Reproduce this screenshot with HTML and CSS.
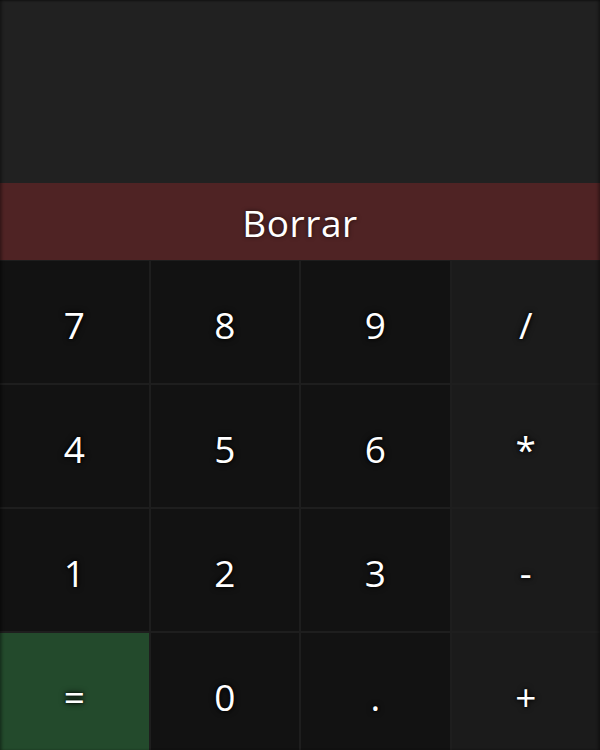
FILE: index.html
```html
<!DOCTYPE html>
<html lang="es">
<head>
<meta charset="utf-8">
<title>Calculadora</title>
<link rel="stylesheet" href="styles.css">
</head>
<body>
<div class="calc">
  <div class="display"></div>
  <button class="clear">Borrar</button>
  <div class="keys">
    <button class="key">7</button>
    <button class="key">8</button>
    <button class="key">9</button>
    <button class="key op">/</button>
    <button class="key">4</button>
    <button class="key">5</button>
    <button class="key">6</button>
    <button class="key op">*</button>
    <button class="key">1</button>
    <button class="key">2</button>
    <button class="key">3</button>
    <button class="key op">-</button>
    <button class="key eq">=</button>
    <button class="key">0</button>
    <button class="key">.</button>
    <button class="key op">+</button>
  </div>
  <div class="vignette"></div>
</div>
</body>
</html>
```
FILE: styles.css
```css
html, body {
  margin: 0;
  padding: 0;
  background: #1e1e1e;
  height: 750px;
  overflow: hidden;
}
.calc {
  position: relative;
  display: flex;
  flex-direction: column;
  width: 600px;
  font-family: "Open Sans", "Noto Sans", sans-serif;
}
.display {
  height: 183px;
  background: #212121;
}
.clear {
  height: 77px;
  border: 0;
  margin: 0;
  padding: 2px 0 0;
  background: #4f2324;
  color: #ffffff;
  font-family: inherit;
  font-size: 37px;
  font-weight: 500;
  letter-spacing: 0.6px;
  text-shadow: 0 0 4px rgba(0,0,0,0.6);
}
.keys {
  display: grid;
  grid-template-columns: repeat(4, 1fr);
  grid-auto-rows: 122px;
  gap: 2px;
  padding-top: 1px;
  background: #1e1e1e;
}
.key {
  border: 0;
  margin: 0;
  padding: 5px 0 0;
  background: #121212;
  color: #ffffff;
  font-family: inherit;
  font-size: 37px;
  font-weight: 500;
  text-shadow: 0 0 6px #000, 0 0 3px #000;
}
.op {
  background: #1b1b1b;
}
.eq {
  background: #234a2c;
}
.vignette {
  position: absolute;
  inset: 0;
  height: 750px;
  pointer-events: none;
  box-shadow: inset 3px 0 3px -1px rgba(0,0,0,0.35), inset -3px 0 3px -1px rgba(0,0,0,0.35), inset 0 2px 2px -1px rgba(0,0,0,0.3);
}
```
